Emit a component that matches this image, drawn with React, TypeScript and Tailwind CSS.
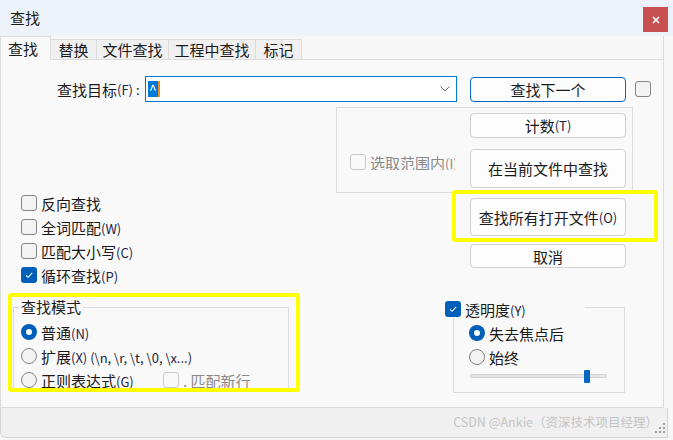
import React from "react";

function Box({ checked = false, disabled = false }: { checked?: boolean; disabled?: boolean }) {
  if (checked) {
    return (
      <span className="flex h-[16px] w-[16px] shrink-0 items-center justify-center rounded-[3px] bg-[#005fb8]">
        <svg width="10" height="10" viewBox="0 0 10 10">
          <path d="M2 5.3 L4.1 7.3 L8.2 2.8" stroke="white" strokeWidth="1.1" fill="none" />
        </svg>
      </span>
    );
  }
  return (
    <span
      className={
        disabled
          ? "block h-[16px] w-[16px] shrink-0 rounded-[3px] border border-[#c8c8c8] bg-[#f9f9f9]"
          : "block h-[16px] w-[16px] shrink-0 rounded-[3px] border border-[#858585] bg-[#f3f3f3]"
      }
    />
  );
}

function Radio({ checked = false }: { checked?: boolean }) {
  if (checked) {
    return (
      <span className="flex h-[16px] w-[16px] shrink-0 items-center justify-center rounded-full bg-[#005fb8]">
        <span className="h-[6px] w-[6px] rounded-full bg-white" />
      </span>
    );
  }
  return <span className="block h-[16px] w-[16px] shrink-0 rounded-full border border-[#858585] bg-[#f3f3f3]" />;
}

function P({ children }: { children: React.ReactNode }) {
  return <span className="text-[13px] text-[#1c1c44]">{children}</span>;
}

export default function App() {
  return (
    <div className="relative h-[440px] w-[673px] overflow-hidden bg-[#f7f7f7] font-['Noto_Sans_CJK_SC','Noto_Sans',sans-serif] text-[15px] leading-none text-[#1a1a1a]">
      {/* title bar */}
      <div className="flex h-[36px] items-start bg-[#eef2fa]">
        <span className="ml-[10px] mt-[10px] leading-[15px]">查找</span>
        <div className="ml-auto mr-[5px] mt-[7px] flex h-[25px] w-[25px] items-center justify-center bg-[#c75050]">
          <svg width="8" height="8" viewBox="0 0 8 8">
            <path d="M1 1L7 7M7 1L1 7" stroke="white" strokeWidth="1.6" />
          </svg>
        </div>
      </div>

      <div className="w-[664px]">
        {/* tabs */}
        <div className="flex h-[24px] items-end">
          <div className="flex h-[24px] w-[51px] items-center border-l border-r border-t border-[#dcdcdc] bg-[#f9f9f9] pl-[7px]">
            查找
          </div>
          <div className="flex h-[21px] w-[46px] items-center justify-center border-b border-r border-t border-[#dcdcdc] bg-[#f0f0f0]">
            替换
          </div>
          <div className="flex h-[21px] w-[72px] items-center justify-center border-b border-r border-t border-[#dcdcdc] bg-[#f0f0f0]">
            文件查找
          </div>
          <div className="flex h-[21px] w-[87px] items-center justify-center border-b border-r border-t border-[#dcdcdc] bg-[#f0f0f0]">
            工程中查找
          </div>
          <div className="flex h-[21px] w-[46px] items-center justify-center border-b border-r border-t border-[#dcdcdc] bg-[#f0f0f0]">
            标记
          </div>
          <div className="h-[24px] flex-1 border-b border-r border-[#dcdcdc]" />
        </div>

        {/* panel */}
        <div className="flex h-[348px] flex-col border-b border-l border-r border-[#dcdcdc] bg-[#f9f9f9]">
          {/* Row A */}
          <div className="mt-[16px] flex h-[26px] items-center">
            <div className="ml-[56px] flex w-[88px] items-center">
              <span>查找目标</span>
              <P>(F)</P>
              <span className="ml-[3px] text-[13px]">:</span>
            </div>
            <div className="flex h-[26px] w-[312px] items-center border border-[#0078d7] bg-white">
              <span className="ml-[2px] flex h-[16px] w-[10px] items-center justify-center bg-[#0078d7] text-[14px] text-white">
                ^
              </span>
              <span className="h-[16px] w-[1.5px] bg-[#f08a24]" />
              <svg className="ml-auto mr-[6px]" width="10" height="6" viewBox="0 0 10 6">
                <path d="M0.5 0.5 L5 5 L9.5 0.5" stroke="#6a6a6a" strokeWidth="1" fill="none" />
              </svg>
            </div>
            <div className="ml-[13px] flex h-[25px] w-[156px] items-center justify-center rounded-[4px] border border-[#0067c0] bg-[#fdfdfd]">
              查找下一个
            </div>
            <div className="ml-[9px] flex">
              <Box />
            </div>
          </div>

          {/* Row B: selection group */}
          <div className="ml-[335px] mt-[5px] flex h-[86px] w-[297px] items-start border border-[#dcdcdc]">
            <div className="flex w-[118px] items-center gap-[4px] overflow-hidden whitespace-nowrap pl-[13px] pt-[46px] text-[#8a8a8a]">
              <Box disabled />
              <span>
                选取范围内<span className="text-[13px]">(I)</span>
              </span>
            </div>
            <div className="ml-[15px] mt-[5px] flex w-[156px] flex-col">
              <div className="flex h-[25px] items-center justify-center rounded-[4px] border border-[#d0d0d0] bg-[#fdfdfd]">
                计数<P>(T)</P>
              </div>
              <div className="mt-[11px] flex h-[39px] items-center justify-center rounded-[4px] border border-[#d0d0d0] bg-[#fdfdfd]">
                在当前文件中查找
              </div>
            </div>
          </div>

          {/* Row C */}
          <div className="flex">
            <div className="-mt-[2px] ml-[20px] flex flex-col">
              <div className="flex h-[24px] items-center gap-[4px]">
                <Box />
                <span>反向查找</span>
              </div>
              <div className="flex h-[24px] items-center gap-[4px]">
                <Box />
                <span>
                  全词匹配<P>(W)</P>
                </span>
              </div>
              <div className="flex h-[24px] items-center gap-[4px]">
                <Box />
                <span>
                  匹配大小写<P>(C)</P>
                </span>
              </div>
              <div className="flex h-[24px] items-center gap-[4px]">
                <Box checked />
                <span>
                  循环查找<P>(P)</P>
                </span>
              </div>
            </div>
            <div className="ml-auto mr-[37px] mt-[5px] flex w-[156px] flex-col">
              <div className="flex h-[38px] items-center justify-center rounded-[4px] border border-[#d0d0d0] bg-[#fdfdfd]">
                查找所有打开文件<P>(O)</P>
              </div>
              <div className="mt-[8px] flex h-[24px] items-center justify-center rounded-[4px] border border-[#d0d0d0] bg-[#fdfdfd]">
                取消
              </div>
            </div>
          </div>

          {/* Row D */}
          <div className="mt-[20px] flex items-start">
            <div className="relative ml-[12px] h-[85px] w-[276px] border border-[#dcdcdc] pl-[7px] pt-[12px]">
              <span className="absolute -top-[10px] left-[5px] bg-[#f9f9f9] px-[2px] leading-[18px]">查找模式</span>
              <div className="flex h-[24px] items-center gap-[4px]">
                <Radio checked />
                <span>
                  普通<P>(N)</P>
                </span>
              </div>
              <div className="flex h-[24px] items-center gap-[4px]">
                <Radio />
                <span className="whitespace-nowrap">
                  扩展<P>(X) (\n, \r, \t, \0, \x...)</P>
                </span>
              </div>
              <div className="flex h-[24px] items-center gap-[4px]">
                <Radio />
                <span className="w-[118px]">
                  正则表达式<P>(G)</P>
                </span>
                <Box disabled />
                <span className="whitespace-nowrap text-[#8a8a8a]">. 匹配新行</span>
              </div>
            </div>

            <div className="relative ml-[164px] h-[86px] w-[172px] border border-[#dcdcdc] pl-[15px] pt-[13px]">
              <div className="absolute -left-[9px] -top-[8px] flex h-[18px] w-[140px] items-center gap-[4px] bg-[#f9f9f9]">
                <Box checked />
                <span>
                  透明度<P>(Y)</P>
                </span>
              </div>
              <div className="flex h-[24px] items-center gap-[4px]">
                <Radio checked />
                <span>失去焦点后</span>
              </div>
              <div className="flex h-[24px] items-center gap-[4px]">
                <Radio />
                <span>始终</span>
              </div>
              <div className="relative ml-[1px] mt-[1px] h-[13px] w-[137px]">
                <div className="absolute left-0 right-0 top-[4px] h-[4px] rounded-[1px] border border-[#d4d4d4] bg-[#e6e6e6]" />
                <div className="absolute left-[114px] top-0 h-[13px] w-[6px] rounded-[1px] bg-[#0067c0]" />
              </div>
            </div>
          </div>
        </div>
      </div>

      {/* status bar */}
      <div className="flex h-[30px] w-[668px] items-center justify-end rounded-bl-[6px] border-b border-l border-r border-[#d4d4d4] bg-[#f0f0f0]">
        <span className="-mr-[4px] whitespace-nowrap text-[12.5px] text-[#c4c4c4]">CSDN @Ankie（资深技术项目经理）</span>
        <svg className="mr-[1px] mt-[10px]" width="12" height="12" viewBox="0 0 12 12">
          <rect x="9" y="1" width="2" height="2" fill="#a0a0a0" />
          <rect x="5" y="5" width="2" height="2" fill="#a0a0a0" />
          <rect x="9" y="5" width="2" height="2" fill="#a0a0a0" />
          <rect x="1" y="9" width="2" height="2" fill="#a0a0a0" />
          <rect x="5" y="9" width="2" height="2" fill="#a0a0a0" />
          <rect x="9" y="9" width="2" height="2" fill="#a0a0a0" />
        </svg>
      </div>

      {/* yellow annotation highlights */}
      <div className="pointer-events-none absolute left-[452px] top-[190px] h-[52px] w-[206px] rounded-[3px] border-[4px] border-[#ffff00]" />
      <div className="pointer-events-none absolute left-[8px] top-[293px] h-[99px] w-[292px] rounded-[3px] border-[4px] border-[#ffff00]" />
    </div>
  );
}
